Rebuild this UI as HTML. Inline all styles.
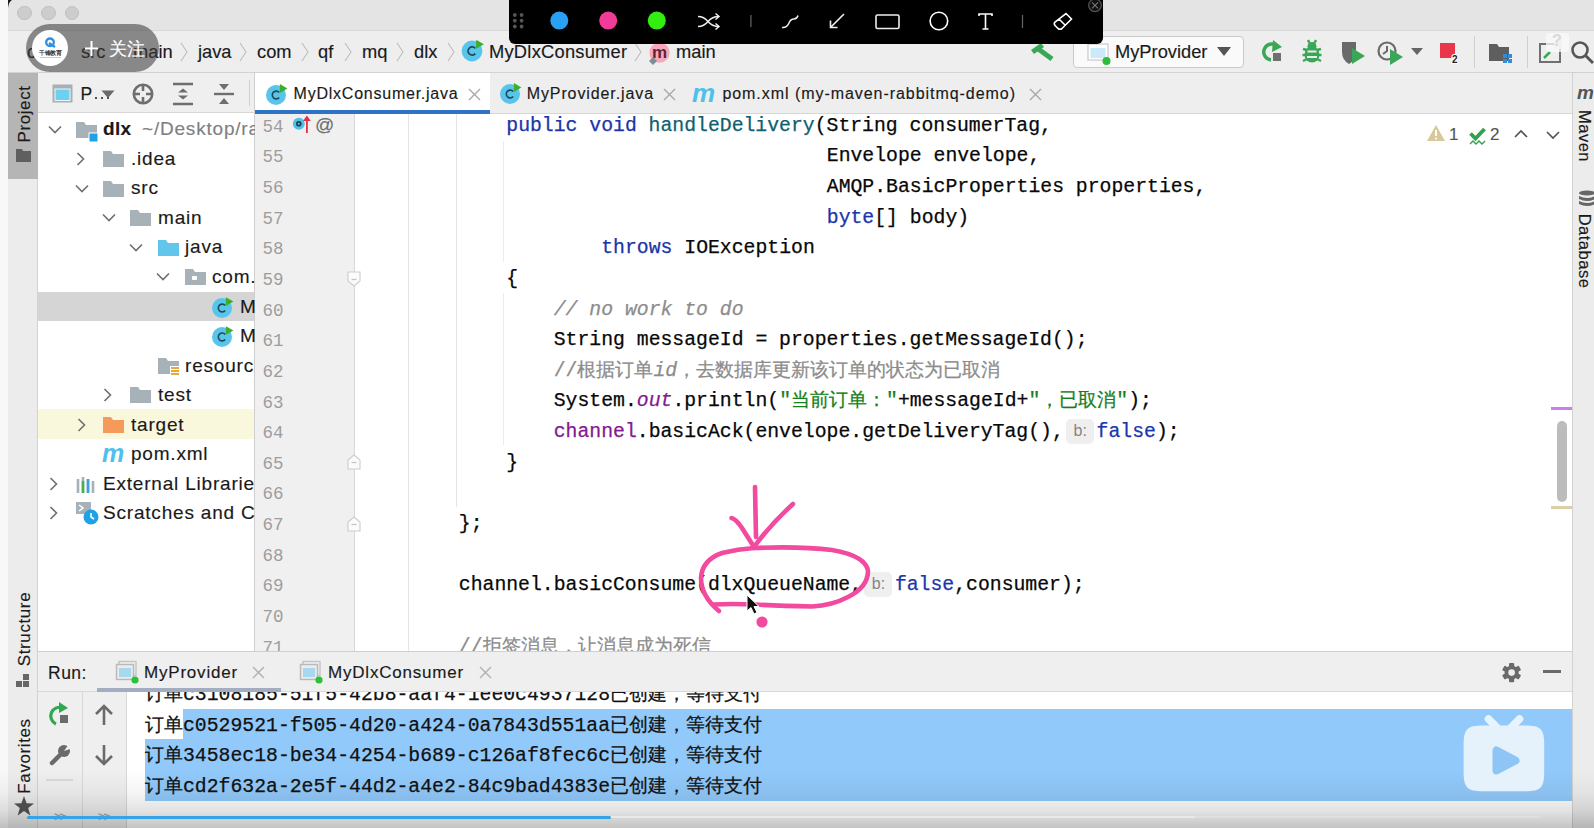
<!DOCTYPE html>
<html><head><meta charset="utf-8">
<style>
*{box-sizing:border-box;margin:0;padding:0}
html,body{width:1594px;height:828px;overflow:hidden;background:#f8f8f8;font-family:"Liberation Sans",sans-serif;color:#1a1a1a;position:relative}
.a{position:absolute}
.s{font-family:"Liberation Sans",sans-serif;white-space:pre;-webkit-text-stroke:0.15px currentColor}
.m{font-family:"Liberation Mono",monospace;white-space:pre}
.cd{-webkit-text-stroke:0.25px currentColor}
.kw{color:#1b35aa}.fn{color:#0f5f70}.pu{color:#84198f}.st{color:#167f20}.cm{color:#8c8c8c;font-style:italic}
.cmn{color:#8c8c8c;font-style:normal}
.hint{display:inline-block;background:#efefef;color:#858585;font-family:"Liberation Sans",sans-serif;font-size:16px;border-radius:5px;height:24.5px;line-height:24px;vertical-align:0.8px;-webkit-text-stroke:0;font-style:normal;text-align:center}
svg{position:absolute;overflow:visible}
</style></head><body>

<div class="a" style="left:8px;top:0px;width:1586px;height:828px;background:#ececec"></div>
<div class="a" style="left:8px;top:0px;width:1586px;height:31px;background:#e4e4e4;border-bottom:1px solid #d8d8d8"></div>
<div class="a" style="left:0px;top:0px;width:8px;height:828px;background:#f8f8f8"></div>
<svg style="left:0;top:0" width="20" height="20"><path d="M8 8 Q8.6 2 12 0 L8 0 Z" fill="#1a1a1a"/></svg>
<div class="a" style="left:17.2px;top:5.9px;width:14.6px;height:14.6px;border-radius:50%;background:#cdcdcd;border:1px solid #c0c0c0"></div>
<div class="a" style="left:41.0px;top:5.9px;width:14.6px;height:14.6px;border-radius:50%;background:#cdcdcd;border:1px solid #c0c0c0"></div>
<div class="a" style="left:64.8px;top:5.9px;width:14.6px;height:14.6px;border-radius:50%;background:#cdcdcd;border:1px solid #c0c0c0"></div>
<div class="a" style="left:8px;top:31px;width:1586px;height:42px;background:#eeeeee;border-bottom:1px solid #d2d2d2"></div>
<div class="a s" style="left:27px;top:41.71px;font-size:18px;line-height:20.70px;color:#1a1a1a;">c</div>
<div class="a s" style="left:81px;top:41.44px;font-size:18.3px;line-height:21.04px;color:#1a1a1a;">src</div>
<svg style="left:116px;top:41px" width="10" height="22"><path d="M1 2 L7 11 L1 20" stroke="#bdbdbd" stroke-width="1.1" fill="none"/></svg>
<div class="a s" style="left:133px;top:41.44px;font-size:18.3px;line-height:21.04px;color:#1a1a1a;">main</div>
<svg style="left:180px;top:41px" width="10" height="22"><path d="M1 2 L7 11 L1 20" stroke="#bdbdbd" stroke-width="1.1" fill="none"/></svg>
<div class="a s" style="left:198px;top:41.44px;font-size:18.3px;line-height:21.04px;color:#1a1a1a;">java</div>
<svg style="left:239px;top:41px" width="10" height="22"><path d="M1 2 L7 11 L1 20" stroke="#bdbdbd" stroke-width="1.1" fill="none"/></svg>
<div class="a s" style="left:257px;top:41.44px;font-size:18.3px;line-height:21.04px;color:#1a1a1a;">com</div>
<svg style="left:301px;top:41px" width="10" height="22"><path d="M1 2 L7 11 L1 20" stroke="#bdbdbd" stroke-width="1.1" fill="none"/></svg>
<div class="a s" style="left:318px;top:41.44px;font-size:18.3px;line-height:21.04px;color:#1a1a1a;">qf</div>
<svg style="left:344px;top:41px" width="10" height="22"><path d="M1 2 L7 11 L1 20" stroke="#bdbdbd" stroke-width="1.1" fill="none"/></svg>
<div class="a s" style="left:362px;top:41.44px;font-size:18.3px;line-height:21.04px;color:#1a1a1a;">mq</div>
<svg style="left:396px;top:41px" width="10" height="22"><path d="M1 2 L7 11 L1 20" stroke="#bdbdbd" stroke-width="1.1" fill="none"/></svg>
<div class="a s" style="left:414px;top:41.44px;font-size:18.3px;line-height:21.04px;color:#1a1a1a;">dlx</div>
<svg style="left:447px;top:41px" width="10" height="22"><path d="M1 2 L7 11 L1 20" stroke="#bdbdbd" stroke-width="1.1" fill="none"/></svg>
<svg style="left:460.1px;top:38.2px" width="26" height="26" viewBox="460.1 38.2 26 26"><circle cx="472.1" cy="51.2" r="10.4" fill="#58c5ec"/><path d="M475.4 48.6 A4.1 4.1 0 1 0 475.4 53.8" stroke="#24495a" stroke-width="1.7" fill="none"/><path d="M476.2 39.9 L484.0 44.5 L476.2 49.0 Z" fill="#3dae2b"/></svg>
<div class="a s" style="left:489px;top:41.44px;font-size:18.3px;line-height:21.04px;color:#1a1a1a;letter-spacing:0.25px">MyDlxConsumer</div>
<svg style="left:634px;top:41px" width="10" height="22"><path d="M1 2 L7 11 L1 20" stroke="#bdbdbd" stroke-width="1.1" fill="none"/></svg>
<svg style="left:645px;top:38px" width="30" height="30" viewBox="645 38 30 30"><circle cx="659.5" cy="52.7" r="10.1" fill="#f9a8bc"/><text x="659.5" y="57.8" font-family="Liberation Sans" font-size="17" font-weight="bold" fill="#5e2434" text-anchor="middle">m</text><path d="M653 57 L657 61 L653 65 L649 61 Z" fill="#7d8d94"/></svg>
<div class="a s" style="left:676px;top:41.44px;font-size:18.3px;line-height:21.04px;color:#1a1a1a;">main</div>
<svg style="left:1026px;top:40px" width="32" height="24" viewBox="1026 40 32 24"><path d="M1031 50 L1041 43 L1044 47 L1034 54 Z" fill="#3aa757"/><path d="M1037 48 L1052 59" stroke="#3aa757" stroke-width="5"/></svg>
<div class="a" style="left:1073px;top:36px;width:171px;height:32px;background:#fafafa;border:1px solid #c9c9c9;border-radius:4px"></div>
<svg style="left:1086px;top:40px" width="30" height="30"><rect x="2" y="4" width="20" height="16" fill="#ffffff" stroke="#d3d3d3" stroke-width="1.5"/><rect x="4.5" y="8" width="15" height="10" fill="#cbe9f7"/><circle cx="20.5" cy="21" r="4" fill="#2dbd3a"/></svg>
<div class="a s" style="left:1115px;top:41.44px;font-size:18.3px;line-height:21.04px;color:#1a1a1a;">MyProvider</div>
<svg style="left:1216px;top:46px" width="16" height="12"><path d="M1 1 L15 1 L8 10 Z" fill="#555"/></svg>
<svg style="left:1259px;top:37px" width="28" height="30"><path d="M19 10 A8 8 0 1 0 12 23" stroke="#3aa757" stroke-width="3.5" fill="none"/><path d="M14 3 L23 10 L13 15 Z" fill="#3aa757"/><rect x="14" y="16" width="8" height="8" fill="#707070"/></svg>
<svg style="left:1299px;top:37px" width="28" height="30"><circle cx="13" cy="9.5" r="4.5" fill="#3aa757"/><ellipse cx="13" cy="17.5" rx="7.5" ry="8" fill="#3aa757"/><path d="M4 12 L8 13 M22 12 L18 13 M3.5 18 L7 18 M22.5 18 L19 18 M4 24 L8 22 M22 24 L18 22 M9 3 L10.5 6 M17 3 L15.5 6" stroke="#3aa757" stroke-width="2.4"/><path d="M8.5 14.5 L17.5 14.5 M8 20 L18 20" stroke="#ececec" stroke-width="2"/></svg>
<svg style="left:1339px;top:37px" width="30" height="30"><path d="M3 5 L17 5 L17 15 Q17 23 10 27 Q3 23 3 15 Z" fill="#6a6a6a"/><path d="M13 11 L26 19 L13 27 Z" fill="#3aa757"/></svg>
<svg style="left:1376px;top:37px" width="30" height="30"><circle cx="11" cy="14" r="8.5" stroke="#6a6a6a" stroke-width="2.2" fill="none"/><path d="M11 9 L11 14 L7 17" stroke="#6a6a6a" stroke-width="2" fill="none"/><path d="M14 12 L27 20 L14 28 Z" fill="#3aa757"/></svg>
<svg style="left:1410px;top:47px" width="14" height="10"><path d="M1 1 L13 1 L7 8 Z" fill="#666"/></svg>
<svg style="left:1438px;top:40px" width="26" height="28"><rect x="2" y="3" width="15" height="15" fill="#e8364a"/><text x="14" y="22.5" font-family="Liberation Sans" font-size="10" font-weight="bold" fill="#222" stroke="#fff" stroke-width="2" paint-order="stroke">2</text></svg>
<div class="a" style="left:1474px;top:36px;width:1px;height:32px;background:#cfcfcf"></div>
<svg style="left:1487px;top:40px" width="30" height="26"><path d="M2 4 L10 4 L12 7 L22 7 L22 21 L2 21 Z" fill="#5e5e5e"/><rect x="16" y="14" width="4" height="4" fill="#2f8ddb"/><rect x="21" y="14" width="4" height="4" fill="#2f8ddb"/><rect x="16" y="19" width="4" height="4" fill="#2f8ddb"/><rect x="21" y="19" width="4" height="4" fill="#2f8ddb"/></svg>
<div class="a" style="left:1527px;top:36px;width:1px;height:32px;background:#cfcfcf"></div>
<svg style="left:1538px;top:38px" width="26" height="28"><rect x="2" y="6" width="20" height="18" fill="none" stroke="#707070" stroke-width="2"/><path d="M6 20 L12 14" stroke="#3aa757" stroke-width="2.5"/><rect x="16" y="1" width="8" height="10" rx="2" fill="#dedede" opacity="0.9"/></svg>
<div class="a" style="left:1546px;top:33px;width:23px;height:19px;border-radius:4px;background:rgba(250,250,250,0.75)"></div>
<div class="a s" style="left:1552px;top:32px;font-size:16px;line-height:18px;color:#dadada;font-weight:bold">?</div>
<svg style="left:1570px;top:40px" width="26" height="26"><circle cx="10" cy="10" r="7.5" stroke="#555" stroke-width="2.6" fill="none"/><path d="M15.5 15.5 L23 23" stroke="#555" stroke-width="3"/></svg>
<div class="a" style="left:8px;top:73px;width:30px;height:755px;background:#ececec;border-right:1px solid #d2d2d2"></div>
<div class="a" style="left:8px;top:73px;width:30px;height:106px;background:#b5b5b5"></div>
<div class="a s" style="left:24.3px;top:113.6px;font-size:17px;line-height:17px;color:#1a1a1a;transform:translate(-50%,-50%) rotate(-90deg);letter-spacing:0.6px">Project</div>
<svg style="left:15px;top:148px" width="18" height="16"><path d="M1 1 L7 1 L8 3 L16 3 L16 14 L1 14 Z" fill="#5f5f5f"/></svg>
<div class="a s" style="left:24.3px;top:628.7px;font-size:17px;line-height:17px;color:#1a1a1a;transform:translate(-50%,-50%) rotate(-90deg);letter-spacing:0.6px">Structure</div>
<svg style="left:16px;top:673px" width="16" height="16"><rect x="0" y="8" width="6" height="6" fill="#666"/><rect x="7" y="8" width="6" height="6" fill="#666"/><rect x="7" y="1" width="6" height="6" fill="#666"/></svg>
<div class="a s" style="left:24.3px;top:756.2px;font-size:17px;line-height:17px;color:#1a1a1a;transform:translate(-50%,-50%) rotate(-90deg);letter-spacing:0.6px">Favorites</div>
<svg style="left:14px;top:796px" width="22" height="22"><path d="M10 0 L12.6 7.2 L20 7.4 L14.2 12 L16.3 19.4 L10 15 L3.7 19.4 L5.8 12 L0 7.4 L7.4 7.2 Z" fill="#555"/></svg>
<div class="a" style="left:38px;top:73px;width:217px;height:40px;background:#efefef;border-bottom:1px solid #d6d6d6"></div>
<svg style="left:52px;top:84px" width="22" height="20"><rect x="0.5" y="0.5" width="20" height="18" fill="#a9b0b5"/><rect x="3" y="5" width="15" height="11.5" fill="#6cd0ee" stroke="#e8f8fd" stroke-width="1"/></svg>
<div class="a s" style="left:80.5px;top:83.76px;font-size:17.5px;line-height:20.12px;color:#1a1a1a;">P</div>
<div class="a" style="left:94.5px;top:96.5px;width:2.6px;height:2.6px;background:#1a1a1a;border-radius:50%"></div>
<div class="a" style="left:100.5px;top:96.5px;width:2.6px;height:2.6px;background:#1a1a1a;border-radius:50%"></div>
<div class="a" style="left:106.5px;top:96.5px;width:2.6px;height:2.6px;background:#1a1a1a;border-radius:50%"></div>
<svg style="left:101px;top:90px" width="14" height="9"><path d="M0.5 0.5 L13.5 0.5 L7 8 Z" fill="#6a6a6a"/></svg>
<svg style="left:132px;top:83px" width="22" height="22"><circle cx="11" cy="11" r="9.2" stroke="#6e6e6e" stroke-width="2.6" fill="none"/><path d="M11 2 L11 8 M11 14 L11 20 M2 11 L8 11 M14 11 L20 11" stroke="#6e6e6e" stroke-width="2.6"/></svg>
<svg style="left:172px;top:82px" width="22" height="24"><path d="M1 2 L21 2 M1 22 L21 22" stroke="#6e6e6e" stroke-width="2.4"/><path d="M6 10.5 L11 6.5 L16 10.5 Z M6 13.5 L11 17.5 L16 13.5 Z" fill="#6e6e6e"/></svg>
<svg style="left:213px;top:82px" width="22" height="24"><path d="M1 12 L21 12" stroke="#6e6e6e" stroke-width="2.4"/><path d="M6 2 L11 8 L16 2 Z M6 22 L11 16 L16 22 Z" fill="#6e6e6e"/></svg>
<div class="a" style="left:249px;top:80px;width:1px;height:26px;background:#d0d0d0"></div>
<div class="a" style="left:38px;top:113px;width:216px;height:538px;background:#fff"></div>
<div class="a" style="left:254px;top:73px;width:1px;height:578px;background:#cfcfcf"></div>
<div class="a" style="left:38px;top:292px;width:216px;height:29px;background:#d5d5d5"></div>
<div class="a" style="left:38px;top:409px;width:216px;height:30px;background:#faf8dc"></div>
<svg style="left:47.5px;top:124.6px" width="14" height="10"><path d="M1 1.5 L7 7.5 L13 1.5" stroke="#6e6e6e" stroke-width="1.6" fill="none"/></svg>
<svg style="left:76px;top:120.6px" width="24" height="20"><path d="M0 1 L8 1 L10 4 L21 4 L21 17 L0 17 Z" fill="#a6b1b8"/><rect x="13" y="12" width="9" height="9" fill="#1ea1e6" stroke="#fff" stroke-width="1"/></svg>
<div class="a s" style="left:103px;top:118.41px;font-size:19px;line-height:21.85px;color:#1a1a1a;letter-spacing:0.3px;font-weight:bold;">dlx</div>
<div class="a s" style="left:142px;top:118.41px;font-size:19px;line-height:21.85px;color:#808080;letter-spacing:0.8px;">~/Desktop/ra</div>
<svg style="left:75.5px;top:152.12px" width="10" height="14"><path d="M1.5 1 L7.5 7 L1.5 13" stroke="#6e6e6e" stroke-width="1.6" fill="none"/></svg>
<svg style="left:103px;top:150.12px" width="24" height="20"><path d="M0 1 L8 1 L10 4 L21 4 L21 17 L0 17 Z" fill="#a6b1b8"/></svg>
<div class="a s" style="left:131px;top:147.93px;font-size:19px;line-height:21.85px;color:#1a1a1a;letter-spacing:0.8px;">.idea</div>
<svg style="left:75px;top:183.64px" width="14" height="10"><path d="M1 1.5 L7 7.5 L13 1.5" stroke="#6e6e6e" stroke-width="1.6" fill="none"/></svg>
<svg style="left:103px;top:179.64px" width="24" height="20"><path d="M0 1 L8 1 L10 4 L21 4 L21 17 L0 17 Z" fill="#a6b1b8"/></svg>
<div class="a s" style="left:131px;top:177.44px;font-size:19px;line-height:21.85px;color:#1a1a1a;letter-spacing:0.8px;">src</div>
<svg style="left:102px;top:213.16px" width="14" height="10"><path d="M1 1.5 L7 7.5 L13 1.5" stroke="#6e6e6e" stroke-width="1.6" fill="none"/></svg>
<svg style="left:130px;top:209.16px" width="24" height="20"><path d="M0 1 L8 1 L10 4 L21 4 L21 17 L0 17 Z" fill="#a6b1b8"/></svg>
<div class="a s" style="left:158px;top:206.97px;font-size:19px;line-height:21.85px;color:#1a1a1a;letter-spacing:0.8px;">main</div>
<svg style="left:129px;top:242.68px" width="14" height="10"><path d="M1 1.5 L7 7.5 L13 1.5" stroke="#6e6e6e" stroke-width="1.6" fill="none"/></svg>
<svg style="left:158px;top:238.68px" width="24" height="20"><path d="M0 1 L8 1 L10 4 L21 4 L21 17 L0 17 Z" fill="#62c6ec"/></svg>
<div class="a s" style="left:185px;top:236.49px;font-size:19px;line-height:21.85px;color:#1a1a1a;letter-spacing:0.8px;">java</div>
<svg style="left:156px;top:272.2px" width="14" height="10"><path d="M1 1.5 L7 7.5 L13 1.5" stroke="#6e6e6e" stroke-width="1.6" fill="none"/></svg>
<svg style="left:185px;top:268.2px" width="24" height="20"><path d="M0 1 L8 1 L10 4 L21 4 L21 17 L0 17 Z" fill="#a6b1b8"/><rect x="7" y="8" width="5" height="4" rx="1" fill="#fff"/></svg>
<div class="a s" style="left:212px;top:266.00px;font-size:19px;line-height:21.85px;color:#1a1a1a;letter-spacing:0.8px;">com.</div>
<svg style="left:210px;top:294.72px" width="26" height="26" viewBox="210 294.72 26 26"><circle cx="222" cy="307.72" r="10" fill="#58c5ec"/><path d="M225.2 305.2 A3.9 3.9 0 1 0 225.2 310.2" stroke="#24495a" stroke-width="1.6" fill="none"/><path d="M225.9 296.9 L233.4 301.3 L225.9 305.6 Z" fill="#3dae2b"/></svg>
<div class="a s" style="left:240px;top:295.53px;font-size:19px;line-height:21.85px;color:#1a1a1a;letter-spacing:0.8px;">M</div>
<svg style="left:210px;top:324.24px" width="26" height="26" viewBox="210 324.24 26 26"><circle cx="222" cy="337.24" r="10" fill="#58c5ec"/><path d="M225.2 334.7 A3.9 3.9 0 1 0 225.2 339.7" stroke="#24495a" stroke-width="1.6" fill="none"/><path d="M225.9 326.4 L233.4 330.8 L225.9 335.1 Z" fill="#3dae2b"/></svg>
<div class="a s" style="left:240px;top:325.05px;font-size:19px;line-height:21.85px;color:#1a1a1a;letter-spacing:0.8px;">M</div>
<svg style="left:158px;top:356.76px" width="24" height="20"><path d="M0 1 L8 1 L10 4 L21 4 L21 17 L0 17 Z" fill="#a6b1b8"/><rect x="12" y="9" width="9" height="10" fill="#fff"/><path d="M13 11 L21 11 M13 14 L21 14 M13 17 L21 17" stroke="#e8a93a" stroke-width="2"/></svg>
<div class="a s" style="left:185px;top:354.56px;font-size:19px;line-height:21.85px;color:#1a1a1a;letter-spacing:0.8px;">resourc</div>
<svg style="left:103px;top:388.28px" width="10" height="14"><path d="M1.5 1 L7.5 7 L1.5 13" stroke="#6e6e6e" stroke-width="1.6" fill="none"/></svg>
<svg style="left:130px;top:386.28px" width="24" height="20"><path d="M0 1 L8 1 L10 4 L21 4 L21 17 L0 17 Z" fill="#a6b1b8"/></svg>
<div class="a s" style="left:158px;top:384.08px;font-size:19px;line-height:21.85px;color:#1a1a1a;letter-spacing:0.8px;">test</div>
<svg style="left:77px;top:417.79999999999995px" width="10" height="14"><path d="M1.5 1 L7.5 7 L1.5 13" stroke="#6e6e6e" stroke-width="1.6" fill="none"/></svg>
<svg style="left:103px;top:415.79999999999995px" width="24" height="20"><path d="M0 1 L8 1 L10 4 L21 4 L21 17 L0 17 Z" fill="#f59a5b"/></svg>
<div class="a s" style="left:131px;top:413.60px;font-size:19px;line-height:21.85px;color:#1a1a1a;letter-spacing:0.8px;">target</div>
<div class="a" style="left:102px;top:441.31999999999994px;font-family:&quot;Liberation Sans&quot;,sans-serif;font-size:25px;font-style:italic;font-weight:bold;color:#4fc0ea;line-height:25px">m</div>
<div class="a s" style="left:131px;top:443.12px;font-size:19px;line-height:21.85px;color:#1a1a1a;letter-spacing:0.8px;">pom.xml</div>
<svg style="left:48.5px;top:476.84000000000003px" width="10" height="14"><path d="M1.5 1 L7.5 7 L1.5 13" stroke="#6e6e6e" stroke-width="1.6" fill="none"/></svg>
<svg style="left:76px;top:474.84000000000003px" width="22" height="20"><path d="M2 4 L2 18 M7 2 L7 18 M12 4 L12 18 M17 6 L17 18" stroke="#a6b1b8" stroke-width="2.6"/><path d="M7 6 L7 18" stroke="#4fae4c" stroke-width="2.6"/><path d="M12 4 L12 18" stroke="#3da1e0" stroke-width="2.6"/></svg>
<div class="a s" style="left:103px;top:472.65px;font-size:19px;line-height:21.85px;color:#1a1a1a;letter-spacing:0.8px;">External Librarie</div>
<svg style="left:48.5px;top:506.36px" width="10" height="14"><path d="M1.5 1 L7.5 7 L1.5 13" stroke="#6e6e6e" stroke-width="1.6" fill="none"/></svg>
<svg style="left:76px;top:502.36px" width="24" height="24"><rect x="0" y="0" width="15" height="12" fill="#a6b1b8"/><path d="M3 3 L7 6 L3 9" stroke="#fff" stroke-width="1.5" fill="none"/><circle cx="15" cy="15" r="7.5" fill="#1ea1e6"/><path d="M15 11 L15 15 L18 17" stroke="#fff" stroke-width="1.6" fill="none"/></svg>
<div class="a s" style="left:103px;top:502.17px;font-size:19px;line-height:21.85px;color:#1a1a1a;letter-spacing:0.8px;">Scratches and C</div>
<div class="a" style="left:255px;top:73px;width:1317px;height:41px;background:#eeeeee;border-bottom:1px solid #d6d6d6"></div>
<div class="a" style="left:255px;top:73px;width:235px;height:41px;background:#fff"></div>
<div class="a" style="left:255px;top:110px;width:235px;height:4px;background:#2f73c6"></div>
<svg style="left:264px;top:81.6px" width="26" height="26" viewBox="264 81.6 26 26"><circle cx="276" cy="94.6" r="10" fill="#58c5ec"/><path d="M279.2 92.1 A3.9 3.9 0 1 0 279.2 97.1" stroke="#24495a" stroke-width="1.6" fill="none"/><path d="M279.9 83.7 L287.4 88.2 L279.9 92.5 Z" fill="#3dae2b"/></svg>
<div class="a s" style="left:293.6px;top:85.12px;font-size:16px;line-height:18.40px;color:#1a1a1a;letter-spacing:0.76px">MyDlxConsumer.java</div>
<svg style="left:468.0px;top:88.0px" width="13.0" height="13.0"><path d="M1 1 L12.0 12.0 M12.0 1 L1 12.0" stroke="#a8a8a8" stroke-width="1.4"/></svg>
<svg style="left:498.4px;top:81.1px" width="26" height="26" viewBox="498.4 81.1 26 26"><circle cx="510.4" cy="94.1" r="10" fill="#58c5ec"/><path d="M513.6 91.6 A3.9 3.9 0 1 0 513.6 96.6" stroke="#24495a" stroke-width="1.6" fill="none"/><path d="M514.3 83.2 L521.8 87.7 L514.3 92.0 Z" fill="#3dae2b"/></svg>
<div class="a s" style="left:526.7px;top:85.12px;font-size:16px;line-height:18.40px;color:#1a1a1a;letter-spacing:0.9px">MyProvider.java</div>
<svg style="left:662.8px;top:88.0px" width="13.0" height="13.0"><path d="M1 1 L12.0 12.0 M12.0 1 L1 12.0" stroke="#a8a8a8" stroke-width="1.4"/></svg>
<div class="a" style="left:692px;top:80px;font-family:&quot;Liberation Sans&quot;,sans-serif;font-size:26px;font-style:italic;font-weight:bold;color:#4fc0ea;line-height:26px">m</div>
<div class="a s" style="left:722.4px;top:85.12px;font-size:16px;line-height:18.40px;color:#1a1a1a;letter-spacing:0.95px">pom.xml (my-maven-rabbitmq-demo)</div>
<svg style="left:1028.9px;top:88.0px" width="13.0" height="13.0"><path d="M1 1 L12.0 12.0 M12.0 1 L1 12.0" stroke="#a8a8a8" stroke-width="1.4"/></svg>
<div class="a" style="left:255px;top:114px;width:100px;height:537px;background:#f0f0f0"></div>
<div class="a" style="left:354px;top:114px;width:1px;height:537px;background:#d8d8d8"></div>
<div class="a" style="left:355px;top:114px;width:1217px;height:537px;background:#fff"></div>
<div class="a" style="left:408px;top:114px;width:1px;height:537px;background:#e4e4e4"></div>
<div class="a" style="left:456px;top:114px;width:1px;height:393px;background:#e4e4e4"></div>
<div class="a" style="left:503px;top:141px;width:1px;height:121px;background:#ececec"></div>
<div class="a" style="left:503px;top:293px;width:1px;height:152px;background:#ececec"></div>
<div class="a m" style="left:262.5px;top:116.83px;font-size:17.5px;line-height:20px;color:#9d9d9d">54</div>
<div class="a m" style="left:262.5px;top:147.46px;font-size:17.5px;line-height:20px;color:#9d9d9d">55</div>
<div class="a m" style="left:262.5px;top:178.09px;font-size:17.5px;line-height:20px;color:#9d9d9d">56</div>
<div class="a m" style="left:262.5px;top:208.72px;font-size:17.5px;line-height:20px;color:#9d9d9d">57</div>
<div class="a m" style="left:262.5px;top:239.35px;font-size:17.5px;line-height:20px;color:#9d9d9d">58</div>
<div class="a m" style="left:262.5px;top:269.98px;font-size:17.5px;line-height:20px;color:#9d9d9d">59</div>
<div class="a m" style="left:262.5px;top:300.61px;font-size:17.5px;line-height:20px;color:#9d9d9d">60</div>
<div class="a m" style="left:262.5px;top:331.24px;font-size:17.5px;line-height:20px;color:#9d9d9d">61</div>
<div class="a m" style="left:262.5px;top:361.87px;font-size:17.5px;line-height:20px;color:#9d9d9d">62</div>
<div class="a m" style="left:262.5px;top:392.50px;font-size:17.5px;line-height:20px;color:#9d9d9d">63</div>
<div class="a m" style="left:262.5px;top:423.13px;font-size:17.5px;line-height:20px;color:#9d9d9d">64</div>
<div class="a m" style="left:262.5px;top:453.76px;font-size:17.5px;line-height:20px;color:#9d9d9d">65</div>
<div class="a m" style="left:262.5px;top:484.39px;font-size:17.5px;line-height:20px;color:#9d9d9d">66</div>
<div class="a m" style="left:262.5px;top:515.02px;font-size:17.5px;line-height:20px;color:#9d9d9d">67</div>
<div class="a m" style="left:262.5px;top:545.65px;font-size:17.5px;line-height:20px;color:#9d9d9d">68</div>
<div class="a m" style="left:262.5px;top:576.28px;font-size:17.5px;line-height:20px;color:#9d9d9d">69</div>
<div class="a m" style="left:262.5px;top:606.91px;font-size:17.5px;line-height:20px;color:#9d9d9d">70</div>
<div class="a m" style="left:262.5px;top:637.54px;font-size:17.5px;line-height:20px;color:#9d9d9d">71</div>
<svg style="left:290px;top:115px" width="40" height="20"><circle cx="8.8" cy="8.8" r="6" fill="#4fc0e8"/><circle cx="8.8" cy="8.8" r="2.8" fill="#1c4152"/><circle cx="8.8" cy="8.8" r="1.1" fill="#4fc0e8"/><path d="M16.9 18 L16.9 3" stroke="#e0314b" stroke-width="1.8"/><path d="M13 6 L16.9 0.5 L20.8 6 Z" fill="#e0314b"/></svg>
<div class="a s" style="left:315px;top:115.4px;font-size:19px;line-height:20px;color:#6e6e6e">@</div>
<svg style="left:347.4px;top:270.55px" width="14" height="16"><path d="M1 1 L13 1 L13 10 L7 15 L1 10 Z" fill="#fbfbfb" stroke="#cdcdcd" stroke-width="1.1"/><path d="M4.5 8.5 L9.5 8.5" stroke="#c2c2c2" stroke-width="1.2"/></svg>
<svg style="left:347.4px;top:454.33000000000004px" width="14" height="16"><path d="M1 6 L7 1 L13 6 L13 15 L1 15 Z" fill="#fbfbfb" stroke="#cdcdcd" stroke-width="1.1"/><path d="M4.5 8.5 L9.5 8.5" stroke="#c2c2c2" stroke-width="1.2"/></svg>
<svg style="left:347.4px;top:515.59px" width="14" height="16"><path d="M1 6 L7 1 L13 6 L13 15 L1 15 Z" fill="#fbfbfb" stroke="#cdcdcd" stroke-width="1.1"/><path d="M4.5 8.5 L9.5 8.5" stroke="#c2c2c2" stroke-width="1.2"/></svg>
<div class="a m cd" style="left:506.28px;top:110.82px;font-size:19.78px;line-height:30.63px;color:#080808"><span class="kw">public void </span><span class="fn">handleDelivery</span>(String consumerTag,</div>
<div class="a m cd" style="left:826.77px;top:141.45px;font-size:19.78px;line-height:30.63px;color:#080808">Envelope envelope,</div>
<div class="a m cd" style="left:826.77px;top:172.08px;font-size:19.78px;line-height:30.63px;color:#080808">AMQP.BasicProperties properties,</div>
<div class="a m cd" style="left:826.77px;top:202.71px;font-size:19.78px;line-height:30.63px;color:#080808"><span class="kw">byte</span>[] body)</div>
<div class="a m cd" style="left:601.24px;top:233.34px;font-size:19.78px;line-height:30.63px;color:#080808"><span class="kw">throws </span>IOException</div>
<div class="a m cd" style="left:506.28px;top:263.97px;font-size:19.78px;line-height:30.63px;color:#080808">{</div>
<div class="a m cd" style="left:553.76px;top:294.60px;font-size:19.78px;line-height:30.63px;color:#080808"><span class="cm">// no work to do</span></div>
<div class="a m cd" style="left:553.76px;top:325.23px;font-size:19.78px;line-height:30.63px;color:#080808">String messageId = properties.getMessageId();</div>
<div class="a m cd" style="left:553.76px;top:355.86px;font-size:19.78px;line-height:30.63px;color:#080808"><span class="cmn">//<span style="font-size:18.9px">根据订单</span><i>id</i><span style="font-size:18.9px">，去数据库更新该订单的状态为已取消</span></span></div>
<div class="a m cd" style="left:553.76px;top:386.49px;font-size:19.78px;line-height:30.63px;color:#080808">System.<span class="pu"><i>out</i></span>.println(<span class="st">"<span style="font-size:18.9px">当前订单：</span>"</span>+messageId+<span class="st">"<span style="font-size:18.9px">，已取消</span>"</span>);</div>
<div class="a m cd" style="left:553.76px;top:417.12px;font-size:19.78px;line-height:30.63px;color:#080808"><span class="pu">channel</span>.basicAck(envelope.getDeliveryTag(),<span class="hint" style="width:28px;margin:0 2.4px 0 2.4px">b:</span><span class="kw">false</span>);</div>
<div class="a m cd" style="left:506.28px;top:447.75px;font-size:19.78px;line-height:30.63px;color:#080808">}</div>
<div class="a m cd" style="left:458.80px;top:509.01px;font-size:19.78px;line-height:30.63px;color:#080808">};</div>
<div class="a m cd" style="left:458.80px;top:570.27px;font-size:19.78px;line-height:30.63px;color:#080808">channel.basicConsume(dlxQueueName,<span class="hint" style="width:28px;margin:0 2.4px 0 2.4px">b:</span><span class="kw">false</span>,consumer);</div>
<div class="a m cd" style="left:458.80px;top:631.53px;font-size:19.78px;line-height:30.63px;color:#080808"><span class="cmn">//<span style="font-size:18.9px">拒签消息，让消息成为死信</span></span></div>
<svg style="left:1426px;top:124px" width="20" height="18"><path d="M10 1 L19 17 L1 17 Z" fill="#d8c89a"/><path d="M10 6 L10 12" stroke="#fff" stroke-width="2"/><circle cx="10" cy="14.6" r="1.1" fill="#fff"/></svg>
<div class="a s" style="left:1449px;top:125.11px;font-size:17px;line-height:19.55px;color:#555;">1</div>
<svg style="left:1468px;top:126px" width="22" height="22"><path d="M2.5 7.5 L7.5 12.5 L16.5 3" stroke="#2fa24f" stroke-width="3.8" fill="none"/><path d="M2 18 L5 15 L8 18 L11 15 L14 18 L17 15" stroke="#2fa24f" stroke-width="1.4" fill="none"/></svg>
<div class="a s" style="left:1490px;top:125.11px;font-size:17px;line-height:19.55px;color:#555;">2</div>
<svg style="left:1514px;top:128.5px" width="14" height="10"><path d="M1 8 L7 2 L13 8" stroke="#555" stroke-width="1.7" fill="none"/></svg>
<svg style="left:1546px;top:129.5px" width="14" height="10"><path d="M1 2 L7 8 L13 2" stroke="#555" stroke-width="1.7" fill="none"/></svg>
<div class="a" style="left:1551px;top:407px;width:21px;height:3px;background:#c97ff2"></div>
<div class="a" style="left:1557px;top:421px;width:10px;height:81px;background:#bcbcbc;border-radius:5px"></div>
<div class="a" style="left:1551px;top:506px;width:21px;height:3px;background:#d9d0a8"></div>
<div class="a" style="left:1572px;top:73px;width:22px;height:755px;background:#ececec;border-left:1px solid #d2d2d2"></div>
<div class="a" style="left:1577px;top:83px;font-family:&quot;Liberation Sans&quot;,sans-serif;font-size:19px;font-style:italic;font-weight:bold;color:#555;line-height:19px">m</div>
<div class="a s" style="left:1585px;top:136px;font-size:16.5px;line-height:16.5px;color:#1a1a1a;transform:translate(-50%,-50%) rotate(90deg);letter-spacing:0.5px">Maven</div>
<svg style="left:1578px;top:190px" width="16" height="18"><ellipse cx="9" cy="3" rx="8" ry="2.5" fill="#666"/><path d="M1 6 Q9 10 17 6 L17 9 Q9 13 1 9 Z M1 11 Q9 15 17 11 L17 14 Q9 18 1 14 Z" fill="#666"/></svg>
<div class="a s" style="left:1585px;top:251px;font-size:16.5px;line-height:16.5px;color:#1a1a1a;transform:translate(-50%,-50%) rotate(90deg);letter-spacing:0.5px">Database</div>
<div class="a" style="left:38px;top:692px;width:89px;height:136px;background:#efefef"></div>
<div class="a" style="left:82px;top:692px;width:1px;height:136px;background:#d8d8d8"></div>
<div class="a" style="left:126px;top:692px;width:1px;height:136px;background:#d8d8d8"></div>
<svg style="left:47px;top:702px" width="28" height="28"><path d="M17 6 A8 8 0 1 0 10 22" stroke="#2fa84f" stroke-width="3.2" fill="none" transform="translate(-1 0)"/><path d="M12 0 L21 6 L12 11 Z" fill="#2fa84f"/><rect x="13" y="13" width="8" height="8" fill="#6b6b6b"/></svg>
<svg style="left:94px;top:704px" width="20" height="22"><path d="M10 21 L10 3" stroke="#6a6a6a" stroke-width="2.6"/><path d="M2 10 L10 2 L18 10" stroke="#6a6a6a" stroke-width="2.6" fill="none"/></svg>
<svg style="left:49px;top:743px" width="24" height="24"><path d="M3 20 L12 11" stroke="#6a6a6a" stroke-width="4.5" stroke-linecap="round"/><circle cx="15" cy="8" r="6" fill="#6a6a6a"/><path d="M15 8 L20 1 L24 5 Z" fill="#efefef"/></svg>
<svg style="left:94px;top:744px" width="20" height="22"><path d="M10 1 L10 19" stroke="#6a6a6a" stroke-width="2.6"/><path d="M2 12 L10 20 L18 12" stroke="#6a6a6a" stroke-width="2.6" fill="none"/></svg>
<div class="a" style="left:46px;top:779px;width:27px;height:2px;background:#d9d9d9"></div>
<div class="a" style="left:127px;top:692px;width:1445px;height:136px;background:#fff"></div>
<div class="a" style="left:183px;top:709px;width:1389px;height:31px;background:#91c9fa"></div>
<div class="a" style="left:145px;top:739px;width:1427px;height:62px;background:#91c9fa"></div>
<div class="a m cd" style="left:145px;top:679.92px;font-size:19.78px;line-height:30.63px;color:#111"><span style="font-size:18.9px">订单</span>c3108185-51f5-42b8-aaf4-1ee0c4937128<span style="font-size:18.9px">已创建，等待支付</span></div>
<div class="a m cd" style="left:145px;top:710.62px;font-size:19.78px;line-height:30.63px;color:#111"><span style="font-size:18.9px">订单</span>c0529521-f505-4d20-a424-0a7843d551aa<span style="font-size:18.9px">已创建，等待支付</span></div>
<div class="a m cd" style="left:145px;top:741.22px;font-size:19.78px;line-height:30.63px;color:#111"><span style="font-size:18.9px">订单</span>3458ec18-be34-4254-b689-c126af8fec6c<span style="font-size:18.9px">已创建，等待支付</span></div>
<div class="a m cd" style="left:145px;top:771.82px;font-size:19.78px;line-height:30.63px;color:#111"><span style="font-size:18.9px">订单</span>cd2f632a-2e5f-44d2-a4e2-84c9bad4383e<span style="font-size:18.9px">已创建，等待支付</span></div>
<div class="a" style="left:38px;top:651px;width:1534px;height:41px;background:#efefef;border-top:1px solid #cfcfcf;border-bottom:1px solid #d8d8d8"></div>
<div class="a s" style="left:48px;top:662.66px;font-size:17.5px;line-height:20.12px;color:#1a1a1a;letter-spacing:0.5px">Run:</div>
<svg style="left:116px;top:661px" width="24" height="24"><rect x="3" y="0.5" width="17" height="14" fill="none" stroke="#c3c3c3" stroke-width="1.4"/><rect x="0.5" y="3.5" width="17" height="15" fill="#eaeaea" stroke="#b9b9b9" stroke-width="1.4"/><rect x="3" y="7" width="12" height="9" fill="#a6d8ee"/><circle cx="19" cy="19" r="3.6" fill="#2bc23a"/></svg>
<div class="a s" style="left:144px;top:663.12px;font-size:17px;line-height:19.55px;color:#1a1a1a;letter-spacing:0.8px">MyProvider</div>
<svg style="left:252.2px;top:665.5px" width="13.0" height="13.0"><path d="M1 1 L12.0 12.0 M12.0 1 L1 12.0" stroke="#b0b0b0" stroke-width="1.4"/></svg>
<div class="a" style="left:97px;top:688px;width:184px;height:4px;background:#a3adc1"></div>
<svg style="left:300px;top:661px" width="24" height="24"><rect x="3" y="0.5" width="17" height="14" fill="none" stroke="#c3c3c3" stroke-width="1.4"/><rect x="0.5" y="3.5" width="17" height="15" fill="#eaeaea" stroke="#b9b9b9" stroke-width="1.4"/><rect x="3" y="7" width="12" height="9" fill="#a6d8ee"/><circle cx="19" cy="19" r="3.6" fill="#2bc23a"/></svg>
<div class="a s" style="left:328px;top:663.12px;font-size:17px;line-height:19.55px;color:#1a1a1a;letter-spacing:0.8px">MyDlxConsumer</div>
<svg style="left:479.0px;top:665.5px" width="13.0" height="13.0"><path d="M1 1 L12.0 12.0 M12.0 1 L1 12.0" stroke="#b0b0b0" stroke-width="1.4"/></svg>
<svg style="left:1501px;top:661.5px" width="21" height="21"><g transform="translate(10.6 10.6)" fill="#6a6a6a"><rect x="-2.6" y="-9.6" width="5.2" height="5" rx="1" transform="rotate(0)"/><rect x="-2.6" y="-9.6" width="5.2" height="5" rx="1" transform="rotate(60)"/><rect x="-2.6" y="-9.6" width="5.2" height="5" rx="1" transform="rotate(120)"/><rect x="-2.6" y="-9.6" width="5.2" height="5" rx="1" transform="rotate(180)"/><rect x="-2.6" y="-9.6" width="5.2" height="5" rx="1" transform="rotate(240)"/><rect x="-2.6" y="-9.6" width="5.2" height="5" rx="1" transform="rotate(300)"/><circle r="7"/></g><circle cx="10.6" cy="10.6" r="3.3" fill="#efefef"/></svg>
<div class="a" style="left:1543px;top:670px;width:18px;height:3px;background:#6a6a6a"></div>
<div class="a" style="left:0;top:770px;width:1594px;height:58px;background:linear-gradient(to bottom,rgba(0,0,0,0) 0%,rgba(0,0,0,0.045) 40%,rgba(0,0,0,0.11) 70%,rgba(0,0,0,0.23) 100%)"></div>
<div class="a s" style="left:54px;top:809px;font-size:13px;color:#8a8a8a;letter-spacing:-2px">&gt;&gt;</div>
<div class="a s" style="left:98px;top:809px;font-size:13px;color:#8a8a8a;letter-spacing:-2px">&gt;&gt;</div>
<div class="a" style="left:610px;top:816px;width:585px;height:2px;background:rgba(255,255,255,0.45)"></div>
<div class="a" style="left:1195px;top:816px;width:345px;height:2px;background:rgba(255,255,255,0.2)"></div>
<div class="a" style="left:27px;top:815.5px;width:584px;height:3px;background:#36a3e6;border-radius:1.5px"></div>
<svg style="left:1455px;top:710px" width="100" height="90" viewBox="1455 710 100 90"><path d="M1488.5 719 L1496.5 727 M1519.5 719 L1511.5 727" stroke="#e8f4fd" stroke-width="7.5" stroke-linecap="round"/><path d="M1483 725.5 L1525 725.5 C1541 725.5 1544.2 729 1544.2 745 L1544.2 771 C1544.2 788 1541 791.2 1525 791.2 L1483 791.2 C1467 791.2 1463.6 788 1463.6 771 L1463.6 745 C1463.6 729 1467 725.5 1483 725.5 Z" fill="#e5f1fb"/><path d="M1496.5 750.5 L1496.5 770.5 L1515.5 760.5 Z" fill="#8ec5f5" stroke="#8ec5f5" stroke-width="8" stroke-linejoin="round"/></svg>
<div class="a" style="left:26px;top:24px;width:133px;height:47.5px;border-radius:24px;background:rgba(62,62,62,0.58)"></div>
<div class="a" style="left:32px;top:29.5px;width:36.4px;height:36.4px;border-radius:50%;background:#fff"></div>
<svg style="left:36px;top:34px" width="30" height="28" viewBox="36 34 30 28"><circle cx="50" cy="42.3" r="3.8" stroke="#2e8ee0" stroke-width="2.3" fill="none"/><path d="M49 43 L55 47" stroke="#2e8ee0" stroke-width="2.2"/><text x="50.3" y="55.3" font-family="Liberation Sans" font-size="6" font-weight="bold" fill="#3a3a3a" text-anchor="middle" letter-spacing="-0.3">千锋教育</text><path d="M40 57.5 L61 57.5" stroke="#b5b5b5" stroke-width="0.7"/></svg>
<svg style="left:84px;top:40px" width="16" height="18"><path d="M7.5 1 L7.5 16 M1 8.5 L14 8.5" stroke="#fff" stroke-width="2"/></svg>
<div class="a s" style="left:109px;top:38.5px;font-size:17.5px;line-height:20px;color:#fff">关注</div>
<div class="a" style="left:508.5px;top:-6px;width:594px;height:50px;background:#000;border-radius:6px"></div>
<svg style="left:508px;top:0" width="600" height="46" viewBox="508 0 600 46"><circle cx="514.8" cy="15" r="1.9" fill="#555"/><circle cx="514.8" cy="20.7" r="1.9" fill="#555"/><circle cx="514.8" cy="26.5" r="1.9" fill="#555"/><circle cx="521.6" cy="15" r="1.9" fill="#555"/><circle cx="521.6" cy="20.7" r="1.9" fill="#555"/><circle cx="521.6" cy="26.5" r="1.9" fill="#555"/><circle cx="559.3" cy="20.6" r="9" fill="#2aa0f5"/><circle cx="608.2" cy="20.6" r="9" fill="#f03c98"/><circle cx="656.8" cy="20.6" r="9" fill="#33ee11"/><path d="M698 16.5 Q704 16.5 708 21.5 Q712 26.5 719 26.5 M698 26.5 Q704 26.5 708 21.5 Q712 16.5 719 16.5" stroke="#eee" stroke-width="1.5" fill="none"/><path d="M715.5 13.5 L719 16.5 L715.5 19.5 M715.5 23.5 L719 26.5 L715.5 29.5" stroke="#eee" stroke-width="1.5" fill="none"/><path d="M750.9 15 L750.9 27" stroke="#666" stroke-width="1.2"/><path d="M782 27.5 Q787 28 789 23 Q790.5 19 794 19 Q797 19 798 15.5" stroke="#eee" stroke-width="1.5" fill="none"/><path d="M844 14 L830.5 27.5 M830.5 20.5 L830.5 27.5 L837.5 27.5" stroke="#eee" stroke-width="1.6" fill="none"/><rect x="876" y="15" width="23" height="13.5" rx="1.5" stroke="#eee" stroke-width="1.6" fill="none"/><circle cx="938.9" cy="21" r="8.8" stroke="#fff" stroke-width="1.6" fill="none"/><path d="M979 16 L979 14 L992 14 L992 16 M985.5 14 L985.5 29 M982.5 29 L988.5 29" stroke="#fff" stroke-width="1.6" fill="none"/><path d="M1022.5 15 L1022.5 28" stroke="#666" stroke-width="1.2"/><path d="M1066 13.5 L1071.5 19 L1062 28.5 Q1060 30 1058 28.5 L1055 25.5 Q1053.5 23.5 1055 22 Z M1058.5 18.5 L1065 25" stroke="#fff" stroke-width="1.6" fill="none"/><circle cx="1095" cy="5.3" r="6.3" stroke="#555" stroke-width="1.2" fill="#111"/><path d="M1092 2.3 L1098 8.3 M1098 2.3 L1092 8.3" stroke="#777" stroke-width="1.1"/></svg>
<svg style="left:0;top:0" width="1594" height="828" viewBox="0 0 1594 828"><g stroke="#f24a9f" stroke-width="4.6" fill="none" stroke-linecap="round" stroke-linejoin="round"><path d="M755 487 Q755.5 512 756 537"/><path d="M731.5 518 Q736 519 742 528 L754 547 Q770 525 793 504"/><path d="M754 548 Q800 546 832 550 Q866 556 868 571 Q868 587 848 597 Q832 605.5 812 606.5 Q780 606 755 604.5 Q730 603.5 714 604.5"/><path d="M719 611 Q701 596 701 578 Q702 560 722 553 Q738 549 754 548"/></g><circle cx="762" cy="622" r="5.6" fill="#f24a9f"/></svg>
<svg style="left:746px;top:594px" width="20" height="24"><path d="M1 1 L1 17 L5 13.5 L8 20 L11 18.5 L8 12.5 L13 12.5 Z" fill="#111" stroke="#fff" stroke-width="1"/></svg>
</body></html>
